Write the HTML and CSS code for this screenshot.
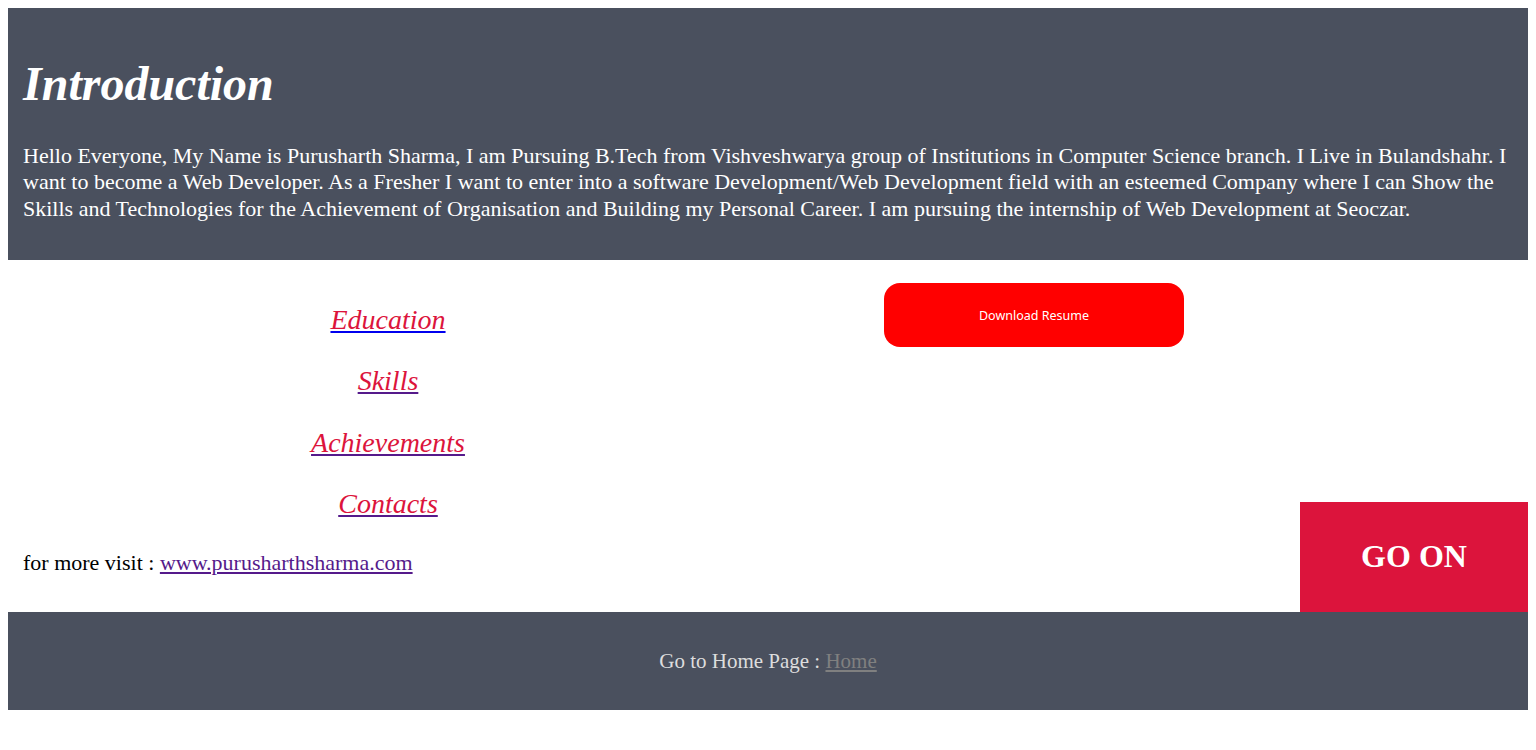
FILE: index.html
```html
<!DOCTYPE html>
<html lang="en">
<head>
<meta charset="utf-8">
<title>Introduction</title>
<link rel="stylesheet" href="styles.css">
</head>
<body>
<header class="intro">
  <h1 class="intro-title">Introduction</h1>
  <p class="intro-text">Hello Everyone, My Name is Purusharth Sharma, I am Pursuing B.Tech from Vishveshwarya group of Institutions in Computer Science branch. I Live in Bulandshahr. I want to become a Web Developer. As a Fresher I want to enter into a software Development/Web Development field with an esteemed Company where I can Show the Skills and Technologies for the Achievement of Organisation and Building my Personal Career. I am pursuing the internship of Web Development at Seoczar.</p>
</header>
<main class="content">
  <div class="left-col">
    <nav class="links">
      <p class="link-item"><a class="nav-link fresh" href="#education"><i>Education</i></a></p>
      <p class="link-item"><a class="nav-link" href="#skills"><i>Skills</i></a></p>
      <p class="link-item"><a class="nav-link" href="#achievements"><i>Achievements</i></a></p>
      <p class="link-item"><a class="nav-link" href="#contacts"><i>Contacts</i></a></p>
    </nav>
    <p class="more">for more visit : <a class="site-link" href="#site">www.purusharthsharma.com</a></p>
  </div>
  <div class="right-col">
    <button class="resume-btn" type="button">Download Resume</button>
    <div class="go-on">GO ON</div>
  </div>
</main>
<footer class="footer">
  <p class="footer-text">Go to Home Page : <a class="home-link" href="#home">Home</a></p>
</footer>
</body>
</html>
```
FILE: styles.css
```css
body {
  margin: 8px;
  font-family: "Liberation Serif", "Times New Roman", serif;
  background: #ffffff;
  color: #000000;
}

.intro {
  background: #4a505e;
  color: #ffffff;
  padding: 16px 15px 15px;
}

.intro-title {
  font-size: 48px;
  font-style: italic;
  font-weight: bold;
  margin: 32px 0;
}

.intro-text {
  font-size: 22px;
  line-height: 26.4px;
  margin: 23px 0;
}

.content {
  display: grid;
  grid-template-columns: 1fr 1fr;
}

.left-col {
  padding: 14px 15px 0;
}

.links {
  text-align: center;
}

.link-item {
  font-size: 28px;
  margin: 29.5px 0;
}

.nav-link {
  color: #551a8b;
  text-decoration: underline;
  text-decoration-color: #551a8b;
}

.nav-link.fresh {
  color: #0000ee;
  text-decoration-color: #0000ee;
}

.nav-link i {
  color: #dc143c;
}

.more {
  font-size: 22px;
  margin: 0 0 36px;
}

.site-link {
  color: #551a8b;
}

.right-col {
  display: flex;
  flex-direction: column;
  justify-content: space-between;
  padding-top: 23px;
}

.resume-btn {
  width: 300px;
  height: 64px;
  margin-left: 116px;
  background: #ff0000;
  color: #ffffff;
  border: none;
  border-radius: 16px;
  font-family: "Noto Sans", "Open Sans", sans-serif;
  font-size: 12.5px;
  padding: 0;
}

.go-on {
  align-self: flex-end;
  width: 228px;
  height: 110px;
  background: #dc143c;
  color: #ffffff;
  font-size: 32px;
  font-weight: bold;
  display: flex;
  align-items: center;
  justify-content: center;
}

.footer {
  background: #4a505e;
  padding: 37px 0 36px;
  text-align: center;
}

.footer-text {
  margin: 0;
  font-size: 21px;
  color: #dddddd;
}

.home-link {
  color: #808080;
}
```
